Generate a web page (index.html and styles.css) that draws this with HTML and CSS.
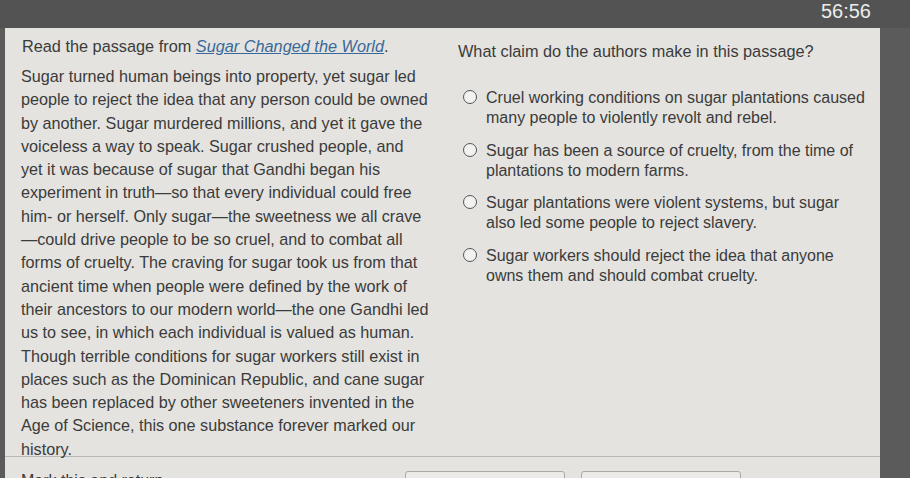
FILE: index.html
```html
<!DOCTYPE html>
<html>
  <head>
    <meta charset="utf-8" />
    <title>Sugar Changed the World - Question</title>
    <link rel="stylesheet" href="styles.css">
  </head>

  <body>
    <div class="topbar">
      <span class="timer">56:56</span>
    </div>

    <div class="screen">
      <div class="card">
        <div class="columns">
          <div class="passage">
            <p class="prompt">Read the passage from <a href="#">Sugar Changed the World</a>.</p>
            <p class="text">Sugar turned human beings into property, yet sugar led people to reject the idea that any person could be owned by another. Sugar murdered millions, and yet it gave the voiceless a way to speak. Sugar crushed people, and yet it was because of sugar that Gandhi began his experiment in truth&mdash;so that every individual could free him- or herself. Only sugar&mdash;the sweetness we all crave &mdash;could drive people to be so cruel, and to combat all forms of cruelty. The craving for sugar took us from that ancient time when people were defined by the work of their ancestors to our modern world&mdash;the one Gandhi led us to see, in which each individual is valued as human. Though terrible conditions for sugar workers still exist in places such as the Dominican Republic, and cane sugar has been replaced by other sweeteners invented in the Age of Science, this one substance forever marked our history.</p>
          </div>

          <div class="question">
            <p class="ask">What claim do the authors make in this passage?</p>
            <label class="option">
              <span class="radio"></span>
              <span class="label">Cruel working conditions on sugar plantations caused many people to violently revolt and rebel.</span>
            </label>
            <label class="option">
              <span class="radio"></span>
              <span class="label">Sugar has been a source of cruelty, from the time of plantations to modern farms.</span>
            </label>
            <label class="option">
              <span class="radio"></span>
              <span class="label">Sugar plantations were violent systems, but sugar also led some people to reject slavery.</span>
            </label>
            <label class="option">
              <span class="radio"></span>
              <span class="label">Sugar workers should reject the idea that anyone owns them and should combat cruelty.</span>
            </label>
          </div>
        </div>

        <div class="footer">
          <span class="mark">Mark this and return</span>
          <div class="buttons">
            <button class="btn">Save and Exit</button>
            <button class="btn">Next</button>
          </div>
        </div>
      </div>
    </div>
  </body>
</html>
```

FILE: styles.css
```css
body {
  margin: 0;
  background: #5b5b5b;
  font-family: "Liberation Sans", Arial, sans-serif;
  overflow: hidden;
  height: 478px;
}

.topbar {
  height: 28px;
  background: #535353;
  display: flex;
  justify-content: flex-end;
  align-items: flex-start;
  padding-right: 39px;
}

.timer {
  color: #ececec;
  font-size: 20px;
  line-height: 22px;
}

.screen {
  padding-left: 5px;
}

.card {
  width: 875px;
  height: 460px;
  background: #e4e3df;
  color: #3b3b3b;
  box-sizing: border-box;
}

.columns {
  display: flex;
  height: 428px;
  border-bottom: 1px solid #b9b8b4;
}

.passage {
  width: 433px;
  padding-left: 16px;
  box-sizing: border-box;
}

.prompt {
  margin: 8px 0 0 1px;
  font-size: 16.3px;
  line-height: 20px;
}

.prompt a {
  color: #39699a;
  font-style: italic;
}

.text {
  width: 408px;
  margin: 9px 0 0;
  font-size: 16.2px;
  line-height: 23.3px;
}

.question {
  padding-left: 20px;
  width: 440px;
  box-sizing: border-box;
}

.ask {
  margin: 13px 0 27px;
  font-size: 16.3px;
  line-height: 20px;
}

.option {
  display: flex;
  gap: 9px;
  font-size: 16px;
  line-height: 20px;
  margin-bottom: 12.5px;
  padding-left: 5px;
}

.label {
  width: 382px;
}

.radio {
  flex: none;
  width: 12px;
  height: 12px;
  margin-top: 2px;
  border: 1.5px solid #555;
  border-radius: 50%;
  background: #f2f2f0;
}

.footer {
  display: flex;
  align-items: flex-start;
  padding: 14px 0 0 16px;
}

.mark {
  color: #3b3b3b;
  font-size: 16px;
  line-height: 20px;
  width: 384px;
}

.buttons {
  display: flex;
  gap: 16px;
}

.btn {
  width: 160px;
  height: 32px;
  background: #ecebe8;
  border: 1px solid #a9a9a6;
  border-radius: 3px;
  font-family: inherit;
  font-size: 15px;
  color: #333;
}
```
